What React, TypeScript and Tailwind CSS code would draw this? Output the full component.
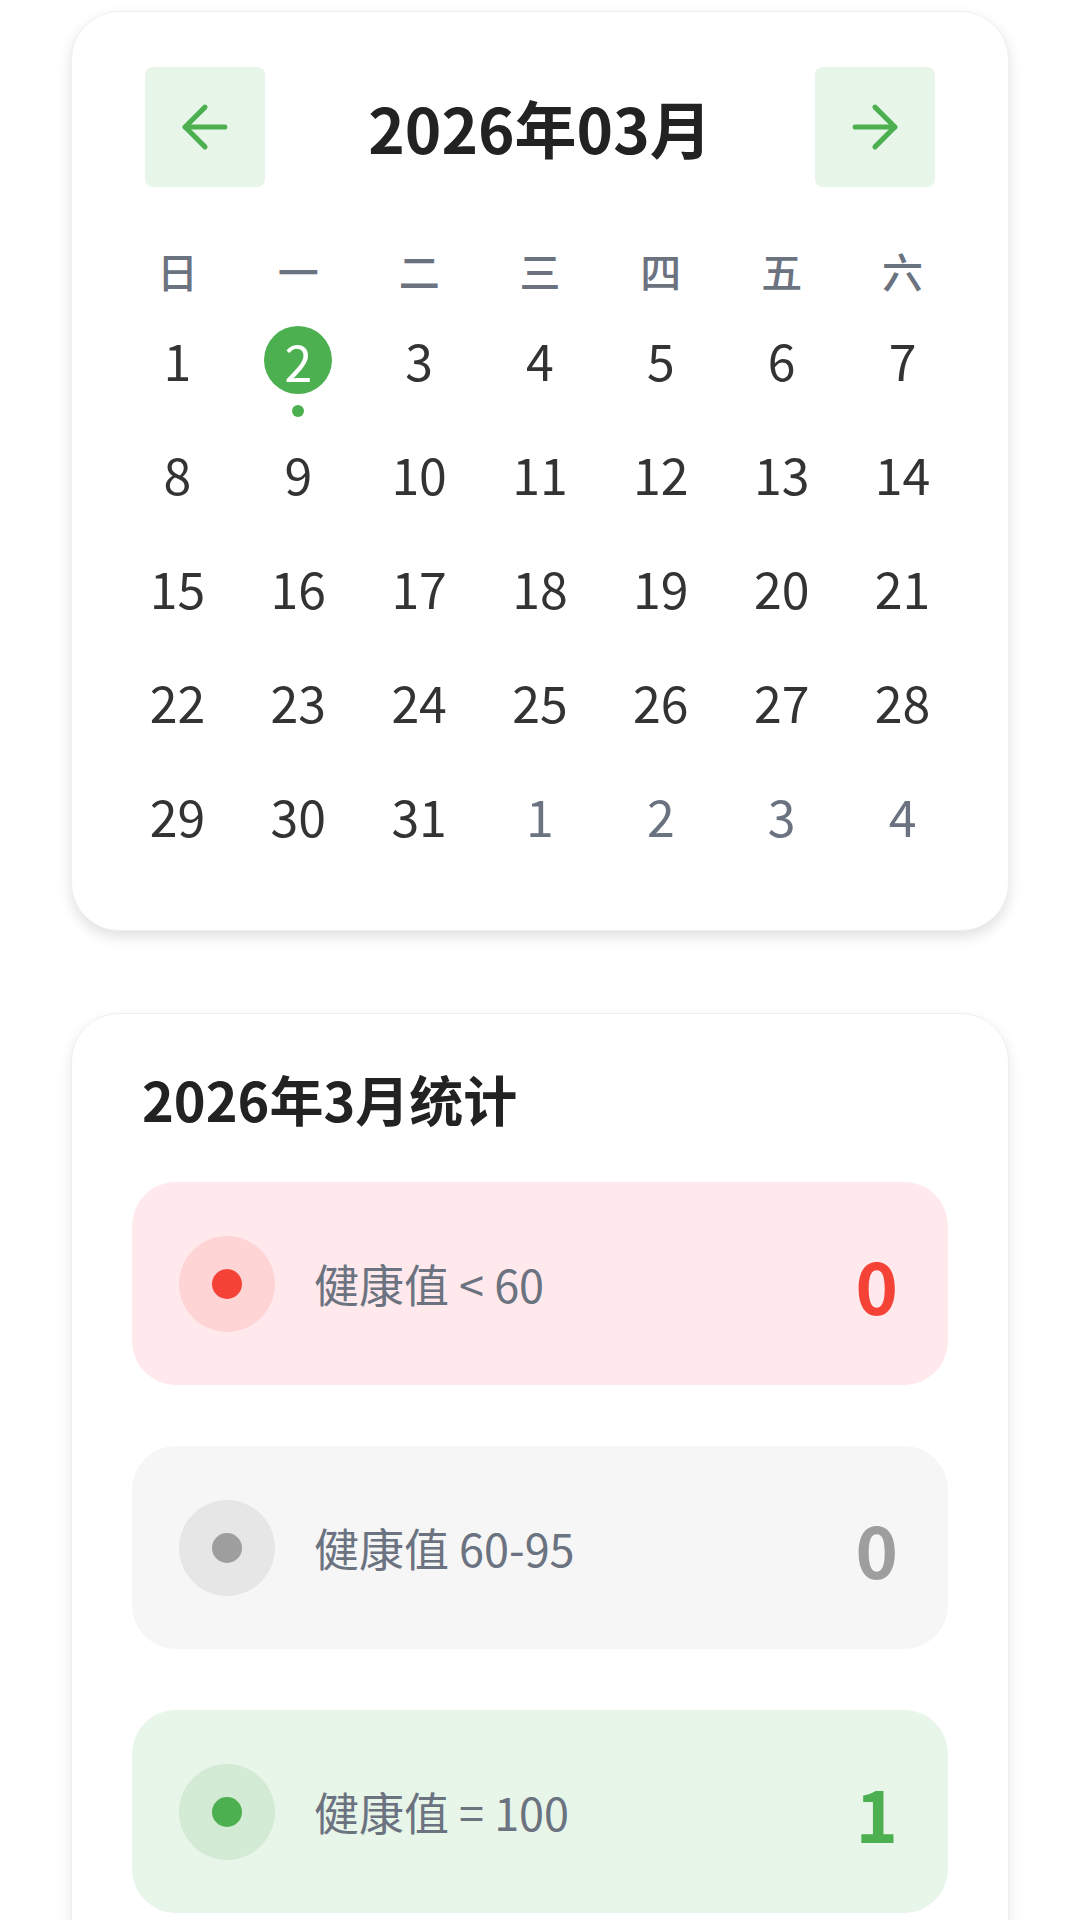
import React from "react";
import { ArrowLeft, ArrowRight } from "lucide-react";

const weekdays = ["日", "一", "二", "三", "四", "五", "六"];

type Day = { d: number; cur: boolean; sel?: boolean };

const days: Day[] = [
  ...Array.from({ length: 31 }, (_, i) => ({ d: i + 1, cur: true, sel: i === 1 })),
  ...[1, 2, 3, 4].map((d) => ({ d, cur: false })),
];

const rows = [
  { label: "健康值 < 60", value: "0", bg: "bg-[#ffe9ec]", ring: "bg-[#ffd4d5]", dot: "bg-[#f44336]", color: "text-[#f44336]" },
  { label: "健康值 60-95", value: "0", bg: "bg-[#f6f6f6]", ring: "bg-[#e6e6e6]", dot: "bg-[#9e9e9e]", color: "text-[#9e9e9e]" },
  { label: "健康值 = 100", value: "1", bg: "bg-[#e8f5e9]", ring: "bg-[#d3ead5]", dot: "bg-[#4caf50]", color: "text-[#4caf50]" },
];

export default function App() {
  return (
    <div
      className="w-[1080px] h-[1920px] overflow-hidden bg-white px-[71px] pt-[11px]"
      style={{ fontFamily: '"Noto Sans CJK SC", "Noto Sans", sans-serif' }}
    >
      {/* Calendar card */}
      <div className="rounded-[48px] bg-white border border-[#efefef] shadow-[0_6px_14px_rgba(0,0,0,0.12)] px-[45px] pt-[55px] pb-[58px]">
        <div className="mx-[28px] flex items-center justify-between">
          <button className="w-[120px] h-[120px] rounded-[8px] bg-[#e8f5e9] flex items-center justify-center">
            <ArrowLeft size={68} strokeWidth={1.8} color="#4caf50" />
          </button>
          <div className="text-[62px] font-bold leading-none text-[#222222]">2026年03月</div>
          <button className="w-[120px] h-[120px] rounded-[8px] bg-[#e8f5e9] flex items-center justify-center">
            <ArrowRight size={68} strokeWidth={1.8} color="#4caf50" />
          </button>
        </div>

        <div className="mt-[53px] grid grid-cols-7 h-[60px] items-center">
          {weekdays.map((w) => (
            <div key={w} className="text-center text-[41px] font-medium leading-none text-[#6b7280]">
              {w}
            </div>
          ))}
        </div>

        <div className="mt-[2px] grid grid-cols-7">
          {days.map((day, i) => (
            <div key={i} className="relative h-[114px] flex items-center justify-center">
              {day.sel ? (
                <>
                  <div className="w-[68px] h-[68px] mt-[2px] rounded-full bg-[#4caf50] flex items-center justify-center text-[50px] leading-[68px] text-white">
                    {day.d}
                  </div>
                  <div className="absolute left-1/2 -translate-x-1/2 top-[103px] w-[12px] h-[12px] rounded-full bg-[#4caf50]" />
                </>
              ) : (
                <span className={`text-[50px] leading-none ${day.cur ? "text-[#333333]" : "text-[#6b7280]"}`}>
                  {day.d}
                </span>
              )}
            </div>
          ))}
        </div>
      </div>

      {/* Stats card */}
      <div className="mt-[82px] rounded-[48px] bg-white border border-[#efefef] shadow-[0_6px_14px_rgba(0,0,0,0.1)] px-[60px] pt-[50px] pb-[60px]">
        <div className="pl-[10px] text-[54px] font-bold leading-[70px] text-[#222222]">2026年3月统计</div>
        <div className="mt-[48px] flex flex-col gap-[61px]">
          {rows.map((r) => (
            <div key={r.label} className={`h-[203px] rounded-[44px] ${r.bg} flex items-center pl-[47px] pr-[50px]`}>
              <div className={`w-[96px] h-[96px] rounded-full ${r.ring} flex items-center justify-center`}>
                <div className={`w-[30px] h-[30px] rounded-full ${r.dot}`} />
              </div>
              <div className="ml-[39px] text-[45px] leading-none text-[#6b7280]">{r.label}</div>
              <div className={`ml-auto text-[72px] font-bold leading-none ${r.color}`}>{r.value}</div>
            </div>
          ))}
        </div>
      </div>
    </div>
  );
}
